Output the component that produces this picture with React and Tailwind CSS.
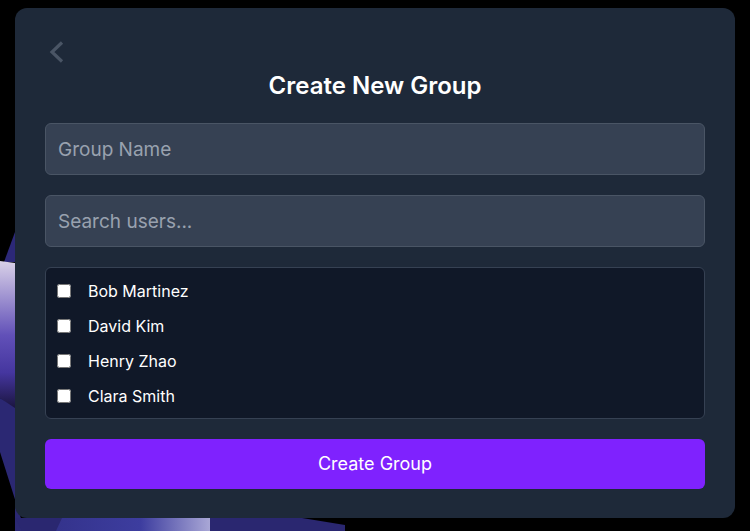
import React, { useState } from 'react';

const users = ['Bob Martinez', 'David Kim', 'Henry Zhao', 'Clara Smith'];

// purple shapes peeking out behind the card
const Backdrop = () => (
  <svg className="absolute inset-0 w-full h-full" viewBox="0 0 750 531" preserveAspectRatio="none">
    <defs>
      <linearGradient id="side" x1="0" y1="0" x2="0" y2="1">
        <stop offset="0" stopColor="#d9d1e8" />
        <stop offset="0.5" stopColor="#6150b8" />
        <stop offset="0.75" stopColor="#45369f" />
        <stop offset="1" stopColor="#18133a" />
      </linearGradient>
      <linearGradient id="strip" x1="0" y1="0" x2="1" y2="0">
        <stop offset="0" stopColor="#34338c" />
        <stop offset="0.55" stopColor="#3d3d9f" />
        <stop offset="1" stopColor="#a9a7d6" />
      </linearGradient>
    </defs>
    <polygon points="15,232 15,262 4,262" fill="#2c2878" />
    <polygon points="0,261 15,263 15,410 0,398" fill="url(#side)" />
    <polygon points="0,398 15,408 15,531 25,531 0,452" fill="#2b2873" />
    <polygon points="15,518 302,518 345,525 345,531 22,531" fill="#2a2770" />
    <polygon points="62,518 210,518 210,531 56,531" fill="url(#strip)" />
  </svg>
);

export default function App() {
  const [groupName, setGroupName] = useState('');
  const [search, setSearch] = useState('');
  const [selected, setSelected] = useState([]);

  const toggle = (name) => {
    setSelected((prev) => (prev.includes(name) ? prev.filter((n) => n !== name) : [...prev, name]));
  };

  return (
    <div
      className="relative w-full h-[531px] bg-black overflow-hidden"
      style={{ fontFamily: 'Inter, "Noto Sans", sans-serif' }}
    >
      <Backdrop />
      <div className="relative px-[15px] pt-[8px]">
        <div className="bg-gray-800 rounded-xl px-[30px] pt-[30px] pb-[29px] flex flex-col">
          <button className="w-6 h-6 mt-[2px] text-gray-600">
            <svg width="24" height="24" viewBox="0 0 24 24" fill="none">
              <polyline points="17,2.5 7,12 17,21.5" stroke="currentColor" strokeWidth="3.2" />
            </svg>
          </button>
          <h2 className="mt-[6px] text-center text-white text-2xl leading-8 font-semibold">Create New Group</h2>

          <input
            type="text"
            value={groupName}
            onChange={(e) => setGroupName(e.target.value)}
            placeholder="Group Name"
            className="mt-[21px] h-[52px] w-full px-3 bg-gray-700 border border-gray-600 rounded-md text-white text-[19px] placeholder-gray-400 focus:outline-none"
          />
          <input
            type="text"
            value={search}
            onChange={(e) => setSearch(e.target.value)}
            placeholder="Search users..."
            className="mt-5 h-[52px] w-full px-3 bg-gray-700 border border-gray-600 rounded-md text-white text-[19px] placeholder-gray-400 focus:outline-none"
          />

          <div className="mt-5 bg-gray-900 border border-gray-700 rounded-md px-[10px] py-[5px]">
            {users
              .filter((u) => u.toLowerCase().includes(search.toLowerCase()))
              .map((u) => (
                <label key={u} className="flex items-center gap-[17px] h-[35px] text-white text-base">
                  <input
                    type="checkbox"
                    checked={selected.includes(u)}
                    onChange={() => toggle(u)}
                    className="w-[14px] h-[14px] ml-[1px]"
                  />
                  {u}
                </label>
              ))}
          </div>

          <button className="mt-5 h-[50px] w-full bg-violet-600 rounded-md text-white text-lg">
            Create Group
          </button>
        </div>
      </div>
    </div>
  );
}
